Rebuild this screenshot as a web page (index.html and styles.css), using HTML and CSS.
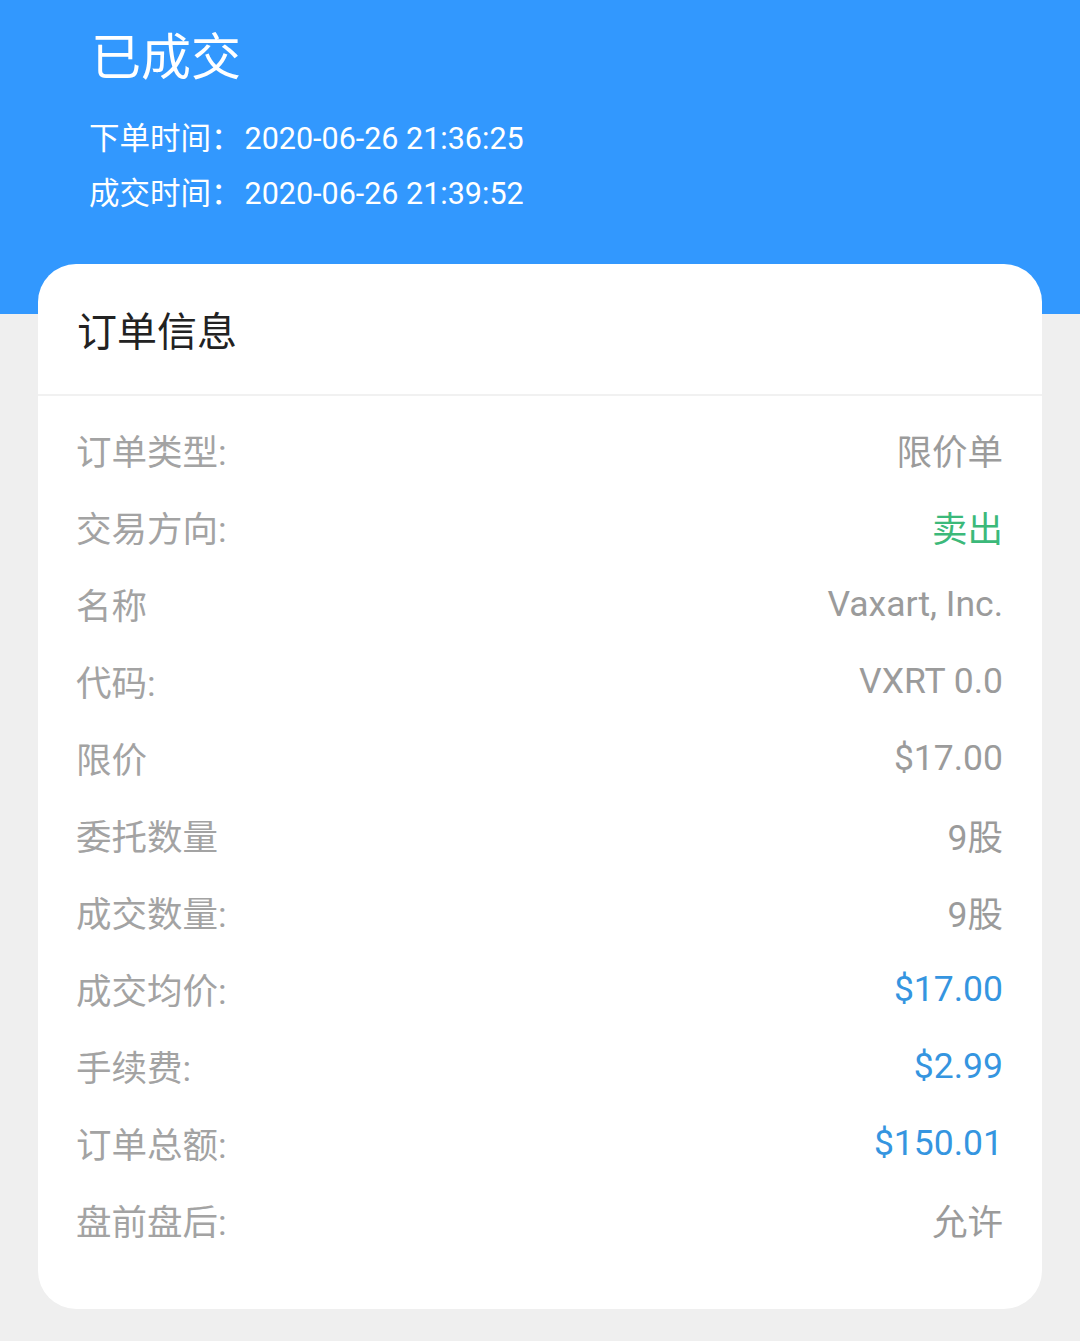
FILE: index.html
```html
<!DOCTYPE html>
<html lang="zh">
<head>
<meta charset="utf-8">
<link rel="stylesheet" href="styles.css">
</head>
<body>
<div class="page">
  <header class="hero">
    <h1 class="status">已成交</h1>
    <div class="time">下单时间：<span class="stamp">2020-06-26 21:36:25</span></div>
    <div class="time">成交时间：<span class="stamp">2020-06-26 21:39:52</span></div>
  </header>
  <section class="card">
    <div class="card-head">订单信息</div>
    <div class="rows">
      <div class="row"><span class="label">订单类型:</span><span class="value">限价单</span></div>
      <div class="row"><span class="label">交易方向:</span><span class="value green">卖出</span></div>
      <div class="row"><span class="label">名称</span><span class="value">Vaxart, Inc.</span></div>
      <div class="row"><span class="label">代码:</span><span class="value">VXRT 0.0</span></div>
      <div class="row"><span class="label">限价</span><span class="value">$17.00</span></div>
      <div class="row"><span class="label">委托数量</span><span class="value">9股</span></div>
      <div class="row"><span class="label">成交数量:</span><span class="value">9股</span></div>
      <div class="row"><span class="label">成交均价:</span><span class="value blue">$17.00</span></div>
      <div class="row"><span class="label">手续费:</span><span class="value blue">$2.99</span></div>
      <div class="row"><span class="label">订单总额:</span><span class="value blue">$150.01</span></div>
      <div class="row"><span class="label">盘前盘后:</span><span class="value">允许</span></div>
    </div>
  </section>
</div>
</body>
</html>
```
FILE: styles.css
```css
* { box-sizing: border-box; }
html, body {
  margin: 0;
  padding: 0;
  background: #efefef;
  font-family: Roboto, "Noto Sans CJK SC", sans-serif;
}
.page {
  width: 1080px;
  min-height: 1341px;
  background: linear-gradient(#3298fe 0, #3298fe 314px, #efefef 314px);
  padding-bottom: 33px;
}
.hero {
  padding: 27px 0 0 89px;
  height: 264px;
  color: #fff;
}
.status {
  margin: 0 0 22px 2px;
  font-size: 50px;
  font-weight: 400;
  line-height: 62px;
}
.time {
  font-size: 30.5px;
  line-height: 55px;
}
.stamp {
  margin-left: 3px;
}
.card {
  margin: 0 38px;
  background: #fff;
  border-radius: 38px;
  padding-bottom: 51px;
}
.card-head {
  height: 132px;
  padding-left: 39px;
  display: flex;
  align-items: center;
  font-size: 40px;
  color: #222;
  border-bottom: 2px solid #f1f1f1;
}
.rows {
  padding: 15px 39px 0 38px;
}
.row {
  height: 77px;
  display: flex;
  justify-content: space-between;
  align-items: center;
  font-size: 35.5px;
}
.label { color: #a3a3a3; }
.value { color: #9b9b9b; }
.green { color: #3cb97a; }
.blue { color: #3595e0; }
```
